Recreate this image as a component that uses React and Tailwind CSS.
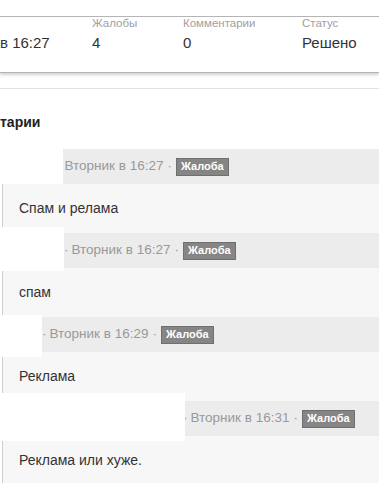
const comments = [
  { time: 'Вторник в 16:27', text: 'Спам и релама', pad: 'pl-[57px]', mask: 'top-[-6px] w-[63px] h-[41px]' },
  { time: 'Вторник в 16:27', text: 'спам', pad: 'pl-[64px]', mask: 'top-[-6px] w-[64px] h-[44px]' },
  { time: 'Вторник в 16:29', text: 'Реклама', pad: 'pl-[42px]', mask: 'top-[-2px] w-[42px] h-[42px]' },
  { time: 'Вторник в 16:31', text: 'Реклама или хуже.', pad: 'pl-[183px]', mask: 'top-[-8px] w-[185px] h-[48px]' },
]

function Comment({ time, text, pad, mask }) {
  return (
    <div className="relative">
      <div className={`h-[35px] bg-[#ececec] flex items-center ${pad} text-[13.5px] text-[#999]`}>
        <span className="mr-[3px]">·</span>
        <span>{time}</span>
        <span className="mx-[4px]">·</span>
        <span className="h-[18px] px-[4px] flex items-center bg-[#858585] border border-[#6f6f6f] text-white text-[11px] font-bold">
          Жалоба
        </span>
      </div>
      <div className="h-[49px] bg-[#f7f7f7] border-l border-[#cfcfcf] ml-[2px] flex items-center pl-[16px] text-[14px] text-[#333]">
        {text}
      </div>
      {/* redacted username */}
      <div className={`absolute left-0 bg-white ${mask}`} />
    </div>
  )
}

export default function App() {
  return (
    <div className="w-[379px] h-[483px] overflow-hidden bg-white" style={{ fontFamily: '"Liberation Sans", Arial, sans-serif' }}>
      <div className="pt-[16px]">
        <div className="h-[57px] border-y border-[#b5b5b5] shadow-[0_2px_3px_rgba(0,0,0,0.18)] grid grid-cols-[92px_91px_119px_1fr]">
          {[
            ['', 'в 16:27'],
            ['Жалобы', '4'],
            ['Комментарии', '0'],
            ['Статус', 'Решено'],
          ].map(([label, value]) => (
            <div key={value} className="flex flex-col">
              <div className="h-[12px] text-[11.5px] leading-[12px] text-[#a0a0a0]">{label}</div>
              <div className="mt-[4px] text-[15px] leading-[20px] text-[#333]">{value}</div>
            </div>
          ))}
        </div>
        <div className="mt-[15px] border-t border-[#e3e3e3]" />
        <div className="mt-[25px] text-[14px] font-bold text-[#222] leading-[16px]">тарии</div>
        <div className="mt-[19px]">
          {comments.map((c, i) => (
            <Comment key={i} {...c} />
          ))}
        </div>
      </div>
    </div>
  )
}
